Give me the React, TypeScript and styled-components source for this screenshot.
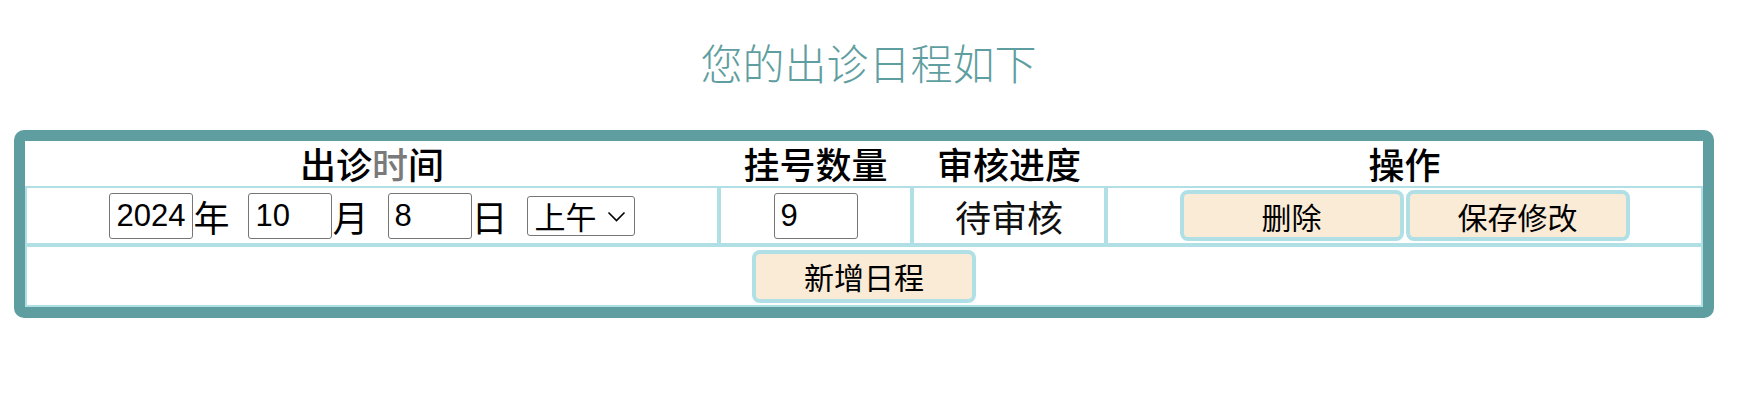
import React from "react";
import styled, { createGlobalStyle } from "styled-components";

const GlobalStyle = createGlobalStyle`
  body {
    margin: 8px;
    background: #ffffff;
    font-family: "Liberation Sans", "Noto Sans CJK SC", sans-serif;
    color: #000000;
  }
`;

const Title = styled.h2`
  margin: 24px 0 38px;
  text-align: center;
  font-family: "Noto Sans CJK SC", sans-serif;
  font-size: 42px;
  line-height: 60px;
  font-weight: 300;
  color: #5f9ea0;
`;

const Frame = styled.div`
  margin-left: 6px;
  width: 1700px;
  box-sizing: border-box;
  border: 11px solid #5f9ea0;
  border-radius: 10px;
`;

const Table = styled.table`
  width: 100%;
  border-collapse: separate;
  border-spacing: 0;
  table-layout: fixed;
`;

const HeadCell = styled.th`
  padding: 0;
  height: 45px;
  line-height: 45px;
  font-size: 36px;
  font-weight: 500;
  text-align: center;
  font-family: "Noto Sans CJK SC", sans-serif;
`;

const Faint = styled.span`
  color: #7a7a7a;
`;

const Cell = styled.td`
  padding: 0;
  border: 2px solid #b0e0e6;
  text-align: center;
  vertical-align: middle;
`;

const CellRow = styled.div<{ $h: number }>`
  height: ${(p) => p.$h}px;
  display: flex;
  align-items: center;
  justify-content: center;
`;

const ButtonGroup = styled.div`
  display: flex;
  align-items: center;
  justify-content: center;
  gap: 2px;
`;

const NumInput = styled.input`
  width: 84px;
  height: 46px;
  box-sizing: border-box;
  border: 1px solid #767676;
  border-radius: 3px;
  padding: 0 6px;
  font-family: "Liberation Sans", sans-serif;
  font-size: 31px;
  color: #000;
  background: #fff;
  outline: none;
`;

const Unit = styled.span`
  font-family: "Noto Sans CJK SC", sans-serif;
  font-size: 36px;
  line-height: 40px;
  margin-right: 19px;
`;

const SelectWrap = styled.div`
  position: relative;
  width: 108px;
  height: 40px;
`;

const Select = styled.select`
  appearance: none;
  -webkit-appearance: none;
  width: 108px;
  height: 40px;
  box-sizing: border-box;
  border: 1px solid #767676;
  border-radius: 3px;
  font-family: "Noto Sans CJK SC", sans-serif;
  font-size: 31px;
  line-height: 38px;
  color: #000;
  background: #fff;
  padding: 0 0 0 7px;
  margin: 0;
`;

const Chevron = styled.svg`
  position: absolute;
  right: 9px;
  top: 15px;
  width: 19px;
  height: 11px;
  pointer-events: none;
`;

const Status = styled.span`
  font-family: "Noto Sans CJK SC", sans-serif;
  font-size: 36px;
  line-height: 40px;
  color: #111;
`;

const ActionButton = styled.button<{ $h: number }>`
  width: 224px;
  height: ${(p) => p.$h}px;
  box-sizing: border-box;
  border: 4px solid #b0e0e6;
  border-radius: 8px;
  background: #faebd7;
  font-family: "Noto Sans CJK SC", sans-serif;
  font-size: 30px;
  color: #000;
  padding: 0;
  cursor: pointer;
`;

export default function App() {
  return (
    <>
      <GlobalStyle />
      <Title>您的出诊日程如下</Title>
      <Frame>
        <Table>
          <colgroup>
            <col style={{ width: 694 }} />
            <col style={{ width: 193 }} />
            <col style={{ width: 194 }} />
            <col />
          </colgroup>
          <thead>
            <tr>
              <HeadCell>
                出诊<Faint>时</Faint>间
              </HeadCell>
              <HeadCell>挂号数量</HeadCell>
              <HeadCell>审核进度</HeadCell>
              <HeadCell>操作</HeadCell>
            </tr>
          </thead>
          <tbody>
            <tr>
              <Cell>
                <CellRow $h={55}>
                  <NumInput defaultValue="2024" />
                  <Unit>年</Unit>
                  <NumInput defaultValue="10" />
                  <Unit>月</Unit>
                  <NumInput defaultValue="8" />
                  <Unit>日</Unit>
                  <SelectWrap>
                    <Select defaultValue="am">
                      <option value="am">上午</option>
                      <option value="pm">下午</option>
                    </Select>
                    <Chevron viewBox="0 0 19 11">
                      <path d="M1.5 1.5 L9.5 9.5 L17.5 1.5" fill="none" stroke="#000" strokeWidth="1.6" />
                    </Chevron>
                  </SelectWrap>
                </CellRow>
              </Cell>
              <Cell>
                <CellRow $h={55}>
                  <NumInput defaultValue="9" />
                </CellRow>
              </Cell>
              <Cell>
                <CellRow $h={55}>
                  <Status>待审核</Status>
                </CellRow>
              </Cell>
              <Cell>
                <CellRow $h={55}>
                  <ButtonGroup>
                    <ActionButton $h={51}>删除</ActionButton>
                    <ActionButton $h={51}>保存修改</ActionButton>
                  </ButtonGroup>
                </CellRow>
              </Cell>
            </tr>
            <tr>
              <Cell colSpan={4}>
                <CellRow $h={58}>
                  <ActionButton $h={53}>新增日程</ActionButton>
                </CellRow>
              </Cell>
            </tr>
          </tbody>
        </Table>
      </Frame>
    </>
  );
}
